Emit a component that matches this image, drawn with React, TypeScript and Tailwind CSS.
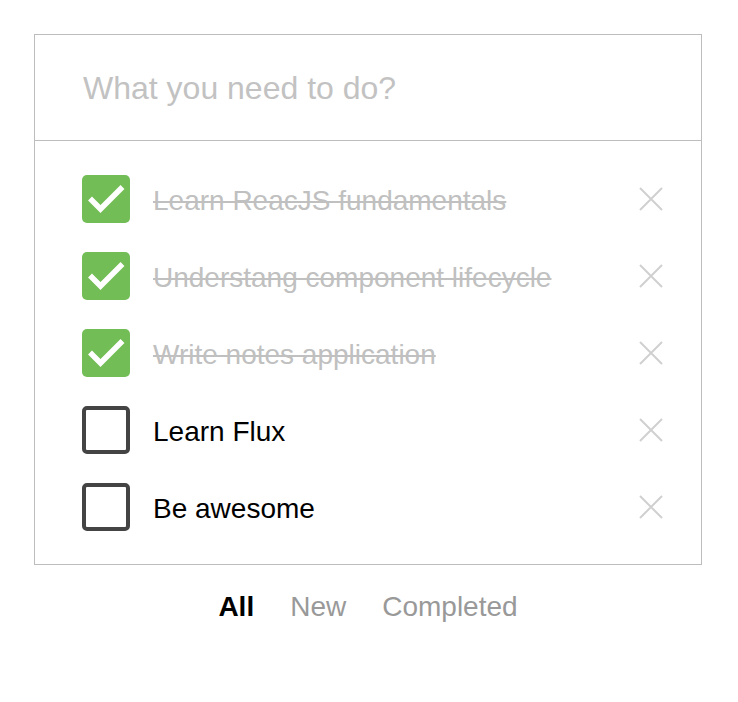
import React, { useState } from "react";

type Todo = { id: number; text: string; done: boolean };

const initial: Todo[] = [
  { id: 1, text: "Learn ReacJS fundamentals", done: true },
  { id: 2, text: "Understang component lifecycle", done: true },
  { id: 3, text: "Write notes application", done: true },
  { id: 4, text: "Learn Flux", done: false },
  { id: 5, text: "Be awesome", done: false },
];

function Check({ done }: { done: boolean }) {
  if (done) {
    return (
      <span className="flex h-[48px] w-[48px] shrink-0 items-center justify-center rounded-[5px] bg-[#72bd55]">
        <svg width="48" height="48" viewBox="0 0 48 48">
          <path d="M8 23.5 L18.5 34 L40.5 12" fill="none" stroke="#ffffff" strokeWidth="5.5" />
        </svg>
      </span>
    );
  }
  return <span className="block h-[48px] w-[48px] shrink-0 rounded-[5px] border-[4px] border-[#444444] bg-white" />;
}

export default function App() {
  const [todos] = useState<Todo[]>(initial);
  return (
    <div className="min-h-[702px] bg-white pl-[34px] pt-[34px]" style={{ fontFamily: '"Liberation Sans", Arial, Helvetica, sans-serif' }}>
      <div className="w-[668px] border border-[#bdbdbd]">
        <div className="flex h-[106px] items-center border-b border-[#bdbdbd] pl-[48px]">
          <input
            className="w-full bg-transparent text-[32px] text-black outline-none placeholder:text-[#c2c2c2]"
            placeholder="What you need to do?"
          />
        </div>
        <ul className="pb-[19px] pt-[19px]">
          {todos.map((t) => (
            <li key={t.id} className="flex h-[77px] items-center pl-[47px] pr-[38px]">
              <Check done={t.done} />
              <span
                className={
                  "ml-[23px] flex-1 pt-[4px] text-[28px] leading-none " +
                  (t.done ? "text-[#c0c0c0] line-through decoration-[2px]" : "text-black")
                }
              >
                {t.text}
              </span>
              <svg width="24" height="24" viewBox="0 0 24 24" className="shrink-0">
                <path d="M1 1 L23 23 M23 1 L1 23" stroke="#d0d0d0" strokeWidth="2" fill="none" />
              </svg>
            </li>
          ))}
        </ul>
      </div>
      <div className="mt-[27px] flex w-[668px] justify-center gap-[36px] text-[28px] leading-[30px]">
        <span className="font-bold text-black">All</span>
        <span className="text-[#999999]">New</span>
        <span className="text-[#999999]">Completed</span>
      </div>
    </div>
  );
}
